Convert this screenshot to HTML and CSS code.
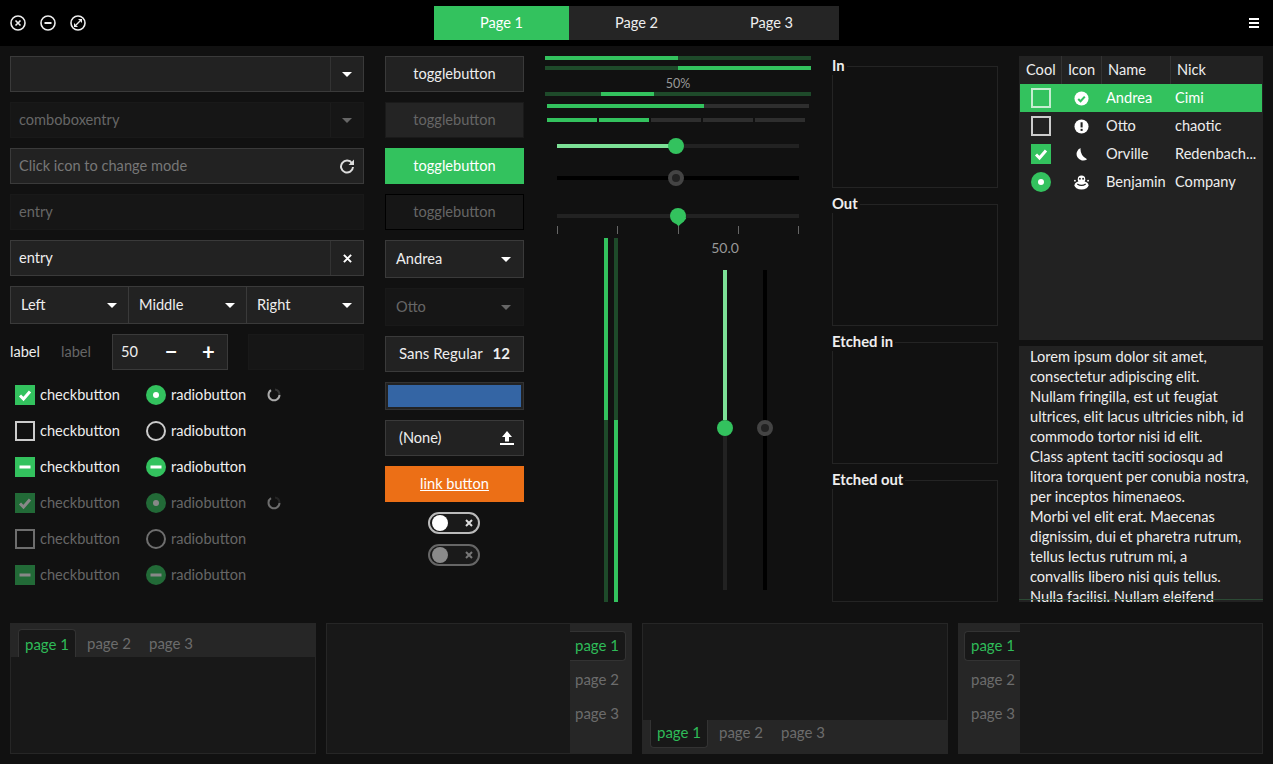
FILE: index.html
```html
<!DOCTYPE html>
<html lang="en">
<head>
    <meta charset="UTF-8">
    <title>Widget Factory</title>
    <link rel="stylesheet" href="styles.css">
</head>
<body>
<svg class="defs" width="0" height="0">
    <symbol id="tick" viewBox="0 0 20 20"><path d="M5 10.5l3.5 3.5L15 6.5" fill="none" stroke="currentColor" stroke-width="3"/></symbol>
    <symbol id="dash" viewBox="0 0 20 20"><rect x="4.5" y="8.5" width="11" height="3" fill="currentColor"/></symbol>
    <symbol id="dot" viewBox="0 0 20 20"><circle cx="10" cy="10" r="3" fill="currentColor"/></symbol>
    <symbol id="spin" viewBox="0 0 16 16"><path d="M5 3.2A5.5 5.5 0 1 0 13.5 8" fill="none" stroke="#aaa" stroke-width="2"/><path d="M13.5 8A5.5 5.5 0 0 0 9 2.6" fill="none" stroke="#333" stroke-width="2"/></symbol>
</svg>

<header class="headerbar">
    <div class="wm-buttons">
        <svg class="wm-icon" viewBox="0 0 16 16"><circle cx="8" cy="8" r="7" fill="none" stroke="#eee" stroke-width="1.6"/><path d="M5.5 5.5l5 5M10.5 5.5l-5 5" stroke="#eee" stroke-width="1.6"/></svg>
        <svg class="wm-icon" viewBox="0 0 16 16"><circle cx="8" cy="8" r="7" fill="none" stroke="#eee" stroke-width="1.6"/><rect x="4.5" y="7" width="7" height="2" fill="#eee"/></svg>
        <svg class="wm-icon" viewBox="0 0 16 16"><circle cx="8" cy="8" r="7" fill="none" stroke="#eee" stroke-width="1.6"/><path d="M8 4h4v4zM8 12H4V8z" fill="#eee"/><path d="M6 10l4-4" stroke="#eee" stroke-width="1.2"/></svg>
    </div>
    <nav class="stack-switcher">
        <a class="stack-tab active">Page 1</a>
        <a class="stack-tab">Page 2</a>
        <a class="stack-tab">Page 3</a>
    </nav>
    <div class="menu-icon"><span></span><span></span><span></span></div>
</header>

<main class="main">
    <section class="col col-entries">
        <div class="entry"><span class="entry-text"></span><span class="entry-btn"><i class="arrow"></i></span></div>
        <div class="entry disabled"><span class="entry-text">comboboxentry</span><span class="entry-btn"><i class="arrow"></i></span></div>
        <div class="entry placeholder"><span class="entry-text">Click icon to change mode</span>
            <svg class="refresh" viewBox="0 0 16 16"><path d="M13 5.2A6 6 0 1 0 14 9" fill="none" stroke="#ddd" stroke-width="2"/><path d="M15 1.5V7H9.5z" fill="#ddd"/></svg>
        </div>
        <div class="entry disabled"><span class="entry-text">entry</span></div>
        <div class="entry"><span class="entry-text">entry</span><span class="entry-btn">
            <svg class="clear" viewBox="0 0 10 10"><path d="M1 1l8 8M9 1L1 9" stroke="#fff" stroke-width="2.2"/></svg></span></div>
        <div class="linked">
            <div class="linked-item">Left<i class="arrow"></i></div>
            <div class="linked-item">Middle<i class="arrow"></i></div>
            <div class="linked-item">Right<i class="arrow"></i></div>
        </div>
        <div class="label-row">
            <span class="label-a">label</span>
            <span class="label-b">label</span>
            <div class="spin"><span class="spin-value">50</span><span class="spin-btn">&minus;</span><span class="spin-btn">+</span></div>
            <div class="entry disabled spin-entry"></div>
        </div>
        <div class="checks">
            <label class="check-item"><span class="box on"><svg><use href="#tick"/></svg></span>checkbutton</label>
            <label class="check-item"><span class="box round on"><svg><use href="#dot"/></svg></span>radiobutton</label>
            <svg class="spinner"><use href="#spin"/></svg>
            <label class="check-item"><span class="box"></span>checkbutton</label>
            <label class="check-item"><span class="box round"></span>radiobutton</label>
            <span></span>
            <label class="check-item"><span class="box on"><svg><use href="#dash"/></svg></span>checkbutton</label>
            <label class="check-item"><span class="box round on"><svg><use href="#dash"/></svg></span>radiobutton</label>
            <span></span>
            <label class="check-item off"><span class="box on"><svg><use href="#tick"/></svg></span>checkbutton</label>
            <label class="check-item off"><span class="box round on"><svg><use href="#dot"/></svg></span>radiobutton</label>
            <svg class="spinner off"><use href="#spin"/></svg>
            <label class="check-item off"><span class="box"></span>checkbutton</label>
            <label class="check-item off"><span class="box round"></span>radiobutton</label>
            <span></span>
            <label class="check-item off"><span class="box on"><svg><use href="#dash"/></svg></span>checkbutton</label>
            <label class="check-item off"><span class="box round on"><svg><use href="#dash"/></svg></span>radiobutton</label>
            <span></span>
        </div>
    </section>

    <section class="col col-buttons">
        <button class="btn">togglebutton</button>
        <button class="btn btn-off">togglebutton</button>
        <button class="btn btn-green">togglebutton</button>
        <button class="btn btn-dark">togglebutton</button>
        <button class="btn btn-combo">Andrea<i class="arrow"></i></button>
        <button class="btn btn-combo btn-faded">Otto<i class="arrow"></i></button>
        <button class="btn btn-font">Sans Regular<b>12</b></button>
        <div class="btn-color"><span></span></div>
        <button class="btn btn-combo btn-file">(None)
            <svg class="upload" viewBox="0 0 14 14"><path d="M7 0l5 6H9v4.5H5V6H2z" fill="#fff"/><rect y="12" width="14" height="2" fill="#fff"/></svg>
        </button>
        <a class="btn btn-link">link button</a>
        <div class="switch"><span class="knob"></span><svg class="switch-x" viewBox="0 0 8 8"><path d="M1 1l6 6M7 1L1 7" stroke="#ddd" stroke-width="2"/></svg></div>
        <div class="switch switch-off"><span class="knob"></span><svg class="switch-x" viewBox="0 0 8 8"><path d="M1 1l6 6M7 1L1 7" stroke="#ddd" stroke-width="2"/></svg></div>
    </section>

    <section class="col col-sliders">
        <div class="bar"><span class="bar-fill half"></span></div>
        <div class="bar bar-next"><span class="bar-fill half-right"></span></div>
        <div class="bar-label">50%</div>
        <div class="bar"><span class="bar-fill pulse"></span></div>
        <div class="level"><span class="level-fill"></span></div>
        <div class="segments">
            <span class="seg on"></span><span class="seg on"></span><span class="seg"></span><span class="seg"></span><span class="seg"></span>
        </div>
        <div class="hscale first"><span class="hscale-fill"></span><span class="thumb"></span></div>
        <div class="hscale black"><span class="thumb thumb-off"></span></div>
        <div class="hscale marked"><span class="pin"></span></div>
        <div class="ticks"><i></i><i></i><i></i><i></i><i></i></div>
        <div class="lower">
            <div class="vbar"><span class="vbar-fill"></span></div>
            <div class="vbar vbar-inv"><span class="vbar-fill"></span></div>
            <div class="vscale-wrap">
                <div class="vscale-value">50.0</div>
                <div class="vscale"><span class="vscale-fill"></span><span class="thumb"></span></div>
            </div>
            <div class="vscale vscale-black"><span class="thumb thumb-off"></span></div>
        </div>
    </section>

    <section class="col col-frames">
        <div class="frame"><span class="frame-label">In</span></div>
        <div class="frame"><span class="frame-label">Out</span></div>
        <div class="frame"><span class="frame-label">Etched in</span></div>
        <div class="frame"><span class="frame-label">Etched out</span></div>
    </section>

    <section class="col col-tree">
        <div class="tree">
            <div class="tree-row tree-head"><span>Cool</span><span>Icon</span><span>Name</span><span>Nick</span></div>
            <div class="tree-row selected">
                <span class="cell-toggle"><i class="box"></i></span>
                <span class="cell-icon"><svg viewBox="0 0 16 16"><circle cx="8" cy="8" r="7.5" fill="#fff"/><path d="M4.5 8.5l2.5 2.5 4.5-5" fill="none" stroke="#33c25e" stroke-width="2.2"/></svg></span>
                <span>Andrea</span><span>Cimi</span>
            </div>
            <div class="tree-row">
                <span class="cell-toggle"><i class="box"></i></span>
                <span class="cell-icon"><svg viewBox="0 0 16 16"><circle cx="8" cy="8" r="7.5" fill="#fff"/><rect x="7" y="3.5" width="2.2" height="5.5" fill="#222"/><rect x="7" y="10.5" width="2.2" height="2.2" fill="#222"/></svg></span>
                <span>Otto</span><span>chaotic</span>
            </div>
            <div class="tree-row">
                <span class="cell-toggle"><i class="box on"><svg><use href="#tick"/></svg></i></span>
                <span class="cell-icon"><svg viewBox="0 0 16 16"><path d="M7 1A7 7 0 1 0 14 13 12 12 0 0 1 7 1z" fill="#fff"/></svg></span>
                <span>Orville</span><span>Redenbach...</span>
            </div>
            <div class="tree-row">
                <span class="cell-toggle"><i class="box round on"><svg><use href="#dot"/></svg></i></span>
                <span class="cell-icon"><svg viewBox="0 0 16 16"><circle cx="8" cy="4.5" r="4" fill="#fff"/><circle cx="6.3" cy="4" r="1" fill="#222"/><circle cx="9.7" cy="4" r="1" fill="#222"/><ellipse cx="8" cy="11" rx="7.5" ry="4.5" fill="#fff"/><path d="M3.5 9.5q4.5 3 9 0" fill="none" stroke="#222" stroke-width="1.3"/><circle cx="1" cy="6" r="1" fill="#fff"/><circle cx="15" cy="6" r="1" fill="#fff"/></svg></span>
                <span>Benjamin</span><span>Company</span>
            </div>
        </div>
        <div class="textview">
            Lorem ipsum dolor sit amet,<br>
            consectetur adipiscing elit.<br>
            Nullam fringilla, est ut feugiat<br>
            ultrices, elit lacus ultricies nibh, id<br>
            commodo tortor nisi id elit.<br>
            Class aptent taciti sociosqu ad<br>
            litora torquent per conubia nostra,<br>
            per inceptos himenaeos.<br>
            Morbi vel elit erat. Maecenas<br>
            dignissim, dui et pharetra rutrum,<br>
            tellus lectus rutrum mi, a<br>
            convallis libero nisi quis tellus.<br>
            Nulla facilisi. Nullam eleifend
        </div>
    </section>
</main>

<footer class="notebooks">
    <div class="notebook nb-top">
        <div class="tabs"><span class="tab active">page 1</span><span class="tab">page 2</span><span class="tab">page 3</span></div>
        <div class="nb-page"></div>
    </div>
    <div class="notebook nb-right">
        <div class="nb-page"></div>
        <div class="tabs"><span class="tab active">page 1</span><span class="tab">page 2</span><span class="tab">page 3</span></div>
    </div>
    <div class="notebook nb-bottom">
        <div class="nb-page"></div>
        <div class="tabs"><span class="tab active">page 1</span><span class="tab">page 2</span><span class="tab">page 3</span></div>
    </div>
    <div class="notebook nb-left">
        <div class="tabs"><span class="tab active">page 1</span><span class="tab">page 2</span><span class="tab">page 3</span></div>
        <div class="nb-page"></div>
    </div>
</footer>
</body>
</html>
```

FILE: styles.css
```css
* {
    box-sizing: border-box;
}
html, body {
    margin: 0;
    height: 764px;
    overflow: hidden;
}
body {
    background-color: #111;
    color: #eee;
    font-family: 'Lato', sans-serif;
    font-size: 14.6px;
    line-height: 16px;
}
.defs {
    position: absolute;
}

/* header bar */
.headerbar {
    height: 46px;
    background: #000;
    display: grid;
    grid-template-columns: 1fr auto 1fr;
    align-items: center;
    padding: 0 10px;
}
.wm-buttons {
    display: flex;
    gap: 14px;
}
.wm-icon {
    width: 16px;
    height: 16px;
}
.stack-switcher {
    display: flex;
}
.stack-tab {
    width: 135px;
    height: 34px;
    line-height: 33px;
    text-align: center;
    background: #252525;
    color: #eee;
}
.stack-tab.active {
    background: #33c25e;
    color: #fff;
}
.menu-icon {
    justify-self: end;
    display: flex;
    flex-direction: column;
    gap: 2px;
    margin-right: 4px;
}
.menu-icon span {
    display: block;
    width: 10px;
    height: 2px;
    background: #fff;
}

/* main columns */
.main {
    display: grid;
    grid-template-columns: 354px 139px 266px 166px 244px;
    column-gap: 21px;
    padding: 10px 10px 0;
    height: 567px;
}
.col {
    display: flex;
    flex-direction: column;
}
.col-entries, .col-buttons {
    gap: 10px;
}

/* entries */
.entry {
    height: 36px;
    display: flex;
    align-items: center;
    background: #222;
    border: 1px solid #3a3a3a;
    color: #eee;
}
.entry-text {
    flex: 1;
    padding-left: 8px;
}
.entry-btn {
    width: 33px;
    height: 100%;
    border-left: 1px solid #333;
    display: flex;
    align-items: center;
    justify-content: center;
}
.entry.disabled {
    background: #161616;
    border-color: #191919;
    color: #666;
}
.entry.disabled .entry-btn {
    border-color: #1c1c1c;
}
.entry.disabled .arrow {
    border-top-color: #666;
}
.entry.placeholder {
    color: #777;
}
.refresh {
    width: 16px;
    height: 16px;
    margin-right: 8px;
}
.clear {
    width: 9px;
    height: 9px;
}
.arrow {
    display: inline-block;
    width: 0;
    height: 0;
    border-left: 5px solid transparent;
    border-right: 5px solid transparent;
    border-top: 5px solid #fff;
}
.linked {
    height: 38px;
    display: grid;
    grid-template-columns: 117px 118px 117px;
    background: #222;
    border: 1px solid #3a3a3a;
}
.linked-item {
    display: flex;
    align-items: center;
    justify-content: space-between;
    padding: 0 11px 0 10px;
    border-left: 1px solid #3a3a3a;
}
.linked-item:first-child {
    border-left: none;
}
.label-row {
    height: 36px;
    display: flex;
    align-items: center;
}
.label-a {
    width: 51px;
}
.label-b {
    width: 51px;
    color: #666;
}
.spin {
    width: 116px;
    height: 36px;
    display: flex;
    align-items: center;
    background: #222;
    border: 1px solid #3a3a3a;
    padding-left: 8px;
}
.spin-value {
    width: 32px;
}
.spin-btn {
    width: 38px;
    text-align: center;
    font-size: 22px;
    font-weight: bold;
    line-height: 1;
    color: #fff;
}
.spin-entry {
    width: 116px;
    margin-left: 20px;
}
.checks {
    display: grid;
    grid-template-columns: 131px 121px 20px;
    grid-auto-rows: 30px;
    row-gap: 6px;
    padding-left: 5px;
    align-items: center;
}
.check-item {
    display: flex;
    align-items: center;
    gap: 5px;
    color: #eee;
}
.check-item.off {
    color: #666;
}
.box {
    display: block;
    width: 20px;
    height: 20px;
    border: 2px solid #ccc;
    color: #fff;
    flex: none;
}
.box svg {
    display: block;
    width: 20px;
    height: 20px;
    margin: 0;
}
.box.on {
    background: #33c25e;
    border: none;
}
.box.round {
    border-radius: 50%;
}
.check-item.off .box {
    opacity: 0.5;
}
.spinner {
    width: 16px;
    height: 16px;
    margin-left: -1px;
}
.spinner.off {
    opacity: 0.6;
}

/* buttons */
.btn {
    display: block;
    height: 36px;
    padding: 0 10px;
    background: #222;
    border: 1px solid #3a3a3a;
    color: #eee;
    font: inherit;
    text-align: center;
}
.btn-off {
    background: #242424;
    border-color: #1a1a1a;
    color: #666;
}
.btn-green {
    background: #33c25e;
    border-color: #33c25e;
    color: #fff;
}
.btn-dark {
    background: #161616;
    border-color: #000;
    color: #666;
}
.btn-combo {
    height: 38px;
    display: flex;
    align-items: center;
    justify-content: space-between;
    padding: 0 12px 0 10px;
}
.btn-faded {
    background: #161616;
    border-color: #191919;
    color: #666;
}
.btn-faded .arrow {
    border-top-color: #666;
}
.btn-font {
    display: flex;
    align-items: center;
    justify-content: space-between;
    padding: 0 13px 2px;
    font-size: 15px;
}
.btn-color {
    height: 28px;
    padding: 2px;
    background: #222;
    border: 1px solid #333;
}
.btn-color span {
    display: block;
    height: 100%;
    background: #3465a4;
}
.btn-file {
    height: 36px;
    padding: 0 9px 0 13px;
}
.upload {
    width: 14px;
    height: 14px;
}
.btn-link {
    line-height: 35px;
    padding: 0;
    background: #ec6f16;
    border: none;
    color: #fff;
    text-decoration: underline;
}
.switch {
    position: relative;
    width: 52px;
    height: 22px;
    align-self: center;
    margin-right: 1px;
    border: 2px solid #bbb;
    border-radius: 11px;
    background: #1a1a1a;
}
.knob {
    position: absolute;
    left: 2px;
    top: 1px;
    width: 16px;
    height: 16px;
    border-radius: 50%;
    background: #fff;
}
.switch-x {
    position: absolute;
    right: 5px;
    top: 5px;
    width: 8px;
    height: 8px;
}
.switch-off {
    border-color: #666;
}
.switch-off .knob {
    background: #8a8a8a;
}
.switch-off .switch-x path {
    stroke: #777;
}

/* progress bars and scales */
.bar {
    position: relative;
    height: 4px;
    background: #1e4a2a;
}
.bar-next {
    margin-top: 6px;
}
.bar-fill {
    position: absolute;
    top: 0;
    bottom: 0;
    background: #33c25e;
}
.half {
    left: 0;
    width: 50%;
}
.half-right {
    left: 50%;
    right: 0;
}
.pulse {
    left: 21%;
    width: 20%;
}
.bar-label {
    height: 22px;
    padding-top: 5px;
    line-height: 17px;
    text-align: center;
    font-size: 12.5px;
    color: #999;
}
.level {
    height: 4px;
    margin: 8px 2px 0;
    background: #2e2e2e;
}
.level-fill {
    display: block;
    width: 60%;
    height: 100%;
    background: #33c25e;
}
.segments {
    display: flex;
    gap: 2px;
    margin: 10px 2px 0;
}
.seg {
    width: 50px;
    height: 4px;
    background: #2e2e2e;
}
.seg.on {
    background: #33c25e;
}
.hscale {
    position: relative;
    height: 4px;
    margin: 28px 12px 0;
    background: #222;
}
.hscale.first {
    margin-top: 22px;
}
.hscale.marked {
    margin-top: 34px;
}
.hscale.black {
    background: #000;
}
.hscale-fill {
    position: absolute;
    left: 0;
    top: 0;
    bottom: 0;
    width: 49%;
    background: #7ce096;
}
.thumb {
    position: absolute;
    left: 111px;
    top: -6px;
    width: 16px;
    height: 16px;
    border-radius: 50%;
    background: #33c25e;
}
.thumb-off {
    background: #222;
    border: 4px solid #444;
}
.pin {
    position: absolute;
    left: 113px;
    top: -6px;
    width: 16px;
    height: 16px;
    background: #33c25e;
    border-radius: 50%;
}
.pin::after {
    content: "";
    position: absolute;
    left: 2.5px;
    top: 5px;
    width: 11px;
    height: 11px;
    background: #33c25e;
    transform: rotate(45deg);
}
.ticks {
    display: flex;
    justify-content: space-between;
    margin: 8px 12px 0;
}
.ticks i {
    display: block;
    width: 1px;
    height: 8px;
    background: #666;
}
.lower {
    display: flex;
    height: 364px;
    margin-top: 4px;
    padding-left: 59px;
}
.vbar {
    position: relative;
    width: 4px;
    margin-right: 6px;
    background: #1e4a2a;
}
.vbar-fill {
    position: absolute;
    left: 0;
    right: 0;
    top: 0;
    height: 182px;
    background: #33c25e;
}
.vbar-inv .vbar-fill {
    top: 182px;
    bottom: 0;
    height: auto;
}
.vscale-wrap {
    width: 40px;
    margin-left: 81px;
    display: flex;
    flex-direction: column;
    align-items: center;
}
.vscale-value {
    height: 32px;
    line-height: 20px;
    font-size: 14px;
    color: #999;
}
.vscale {
    position: relative;
    width: 4px;
    height: 320px;
    background: #222;
}
.vscale-fill {
    position: absolute;
    left: 0;
    right: 0;
    top: 0;
    height: 150px;
    background: #7ce096;
}
.vscale .thumb {
    left: -6px;
    top: 150px;
}
.vscale-black {
    margin: 32px 0 0 18px;
    background: #000;
}

/* frames */
.col-frames {
    padding-top: 10px;
    gap: 16px;
}
.frame {
    position: relative;
    height: 122px;
    border: 1px solid #242424;
}
.frame-label {
    position: absolute;
    left: -1px;
    top: -12px;
    padding-right: 2px;
    line-height: 20px;
    background: #111;
    font-weight: bold;
    font-size: 14.8px;
    color: #eee;
}

/* tree and text view */
.col-tree {
    gap: 6px;
}
.tree {
    height: 284px;
    background: #222;
    padding-left: 1px;
}
.tree-row {
    display: grid;
    grid-template-columns: 42px 40px 69px 1fr;
    height: 28px;
    align-items: center;
    white-space: nowrap;
}
.tree-row span:nth-child(3), .tree-row span:nth-child(4) {
    padding-left: 4px;
}
.tree-head span {
    height: 28px;
    line-height: 27px;
    padding-left: 6px;
    border-right: 1px solid #333;
}
.tree-head span:nth-child(3), .tree-head span:nth-child(4) {
    padding-left: 6px;
}
.tree-head span:last-child {
    border-right: none;
}
.tree-row.selected {
    background: #33c25e;
    color: #fff;
    margin-right: 1px;
}
.selected .box {
    border-color: #c5edd0;
}
.cell-toggle, .cell-icon {
    display: flex;
    justify-content: center;
}
.cell-icon {
    padding-right: 2px;
}
.cell-icon svg {
    width: 15px;
    height: 15px;
}
.textview {
    position: relative;
    height: 256px;
    padding: 1px 0 0 11px;
    overflow: hidden;
    background: #222;
    line-height: 20px;
    white-space: nowrap;
    color: #eee;
}
.textview::after {
    content: "";
    position: absolute;
    left: 0;
    right: 0;
    bottom: 2px;
    height: 1px;
    background: #2c4a35;
}

/* notebooks */
.notebooks {
    display: grid;
    grid-template-columns: 306px 306px 306px 305px;
    column-gap: 10px;
    padding: 10px 10px 0;
}
.notebook {
    height: 131px;
    display: flex;
    background: #181818;
    border: 1px solid #262626;
    color: #6c6c6c;
}
.nb-top, .nb-bottom {
    flex-direction: column;
}
.nb-page {
    flex: 1;
}
.tabs {
    display: flex;
    background: #262626;
    font-size: 15px;
}
.nb-top .tabs, .nb-bottom .tabs {
    height: 33px;
    gap: 4px;
    padding: 5px 7px 0;
}
.nb-bottom .tabs {
    padding: 0 7px 6px;
}
.nb-left .tabs, .nb-right .tabs {
    width: 61px;
    flex-direction: column;
    gap: 4px;
    padding-top: 7px;
}
.tab {
    display: block;
    width: 58px;
    height: 28px;
    line-height: 28px;
    text-align: center;
}
.nb-bottom .tab {
    line-height: 24px;
}
.nb-left .tab, .nb-right .tab {
    width: 56px;
    height: 30px;
    line-height: 28px;
    text-align: left;
    padding-left: 5px;
}
.nb-left .tab {
    margin-left: 5px;
    padding-left: 7px;
}
.tab.active {
    color: #2fbb58;
    background: #181818;
    border: 1px solid #333;
}
.nb-top .tab.active {
    border-bottom: none;
    border-radius: 4px 4px 0 0;
}
.nb-bottom .tab.active {
    border-top: none;
    border-radius: 0 0 4px 4px;
}
.nb-right .tab.active {
    border-left: none;
    border-radius: 0 4px 4px 0;
    line-height: 26px;
}
.nb-left .tab.active {
    border-right: none;
    border-radius: 4px 0 0 4px;
    line-height: 26px;
    padding-left: 6px;
}
```
